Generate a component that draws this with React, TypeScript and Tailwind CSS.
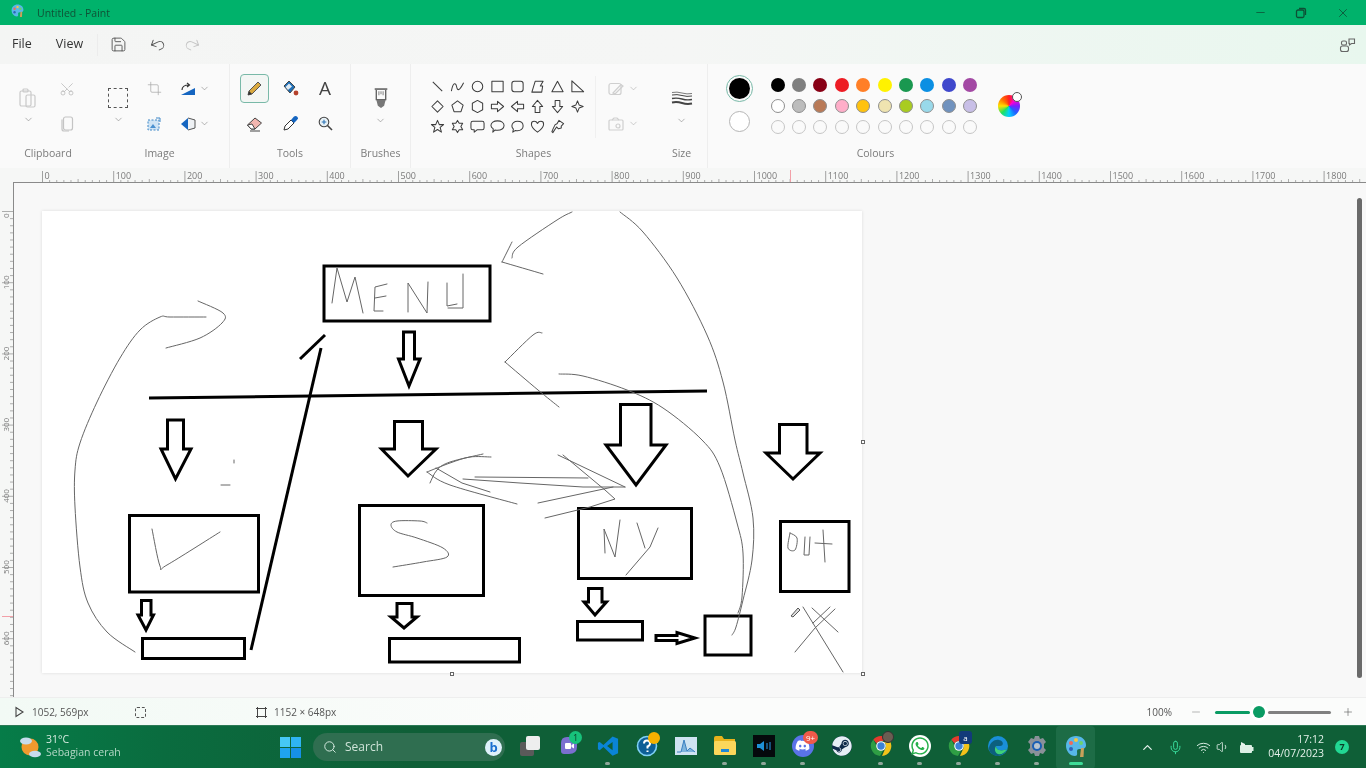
import React from "react";
import { ChevronDown, ChevronUp, Scissors, Crop, Save, Undo2, Redo2, Search, Mic, Wifi, Volume1, Minus, Plus, X } from "lucide-react";
import { FaDiscord, FaSteam, FaWhatsapp } from "react-icons/fa";

const Chev = ({ c = "text-[#8a8a8a]" }: { c?: string }) => <ChevronDown size={11} strokeWidth={1.4} className={c} />;

const shapes: React.ReactNode[] = [
  <path d="M3 3L13 13" />,
  <path d="M1.5 13C3 4 6 3 7 8S10 13 14.5 4" />,
  <circle cx="8" cy="8" r="5.6" />,
  <rect x="2" y="2.5" width="12" height="11" />,
  <rect x="2" y="2.5" width="12" height="11" rx="2.5" />,
  <path d="M2 14L5.5 2.5H14L11 7.5H13.5L12.5 14Z" />,
  <path d="M8 2.5L14 13.5H2Z" />,
  <path d="M2 2V13.5H14.5Z" />,
  <path d="M8 2L14 8L8 14L2 8Z" />,
  <path d="M8 2L14 6.5L11.7 13.5H4.3L2 6.5Z" />,
  <path d="M8 1.5L13.5 4.5V11.5L8 14.5L2.5 11.5V4.5Z" />,
  <path d="M1.5 5.5H8V2.5L14.5 8L8 13.5V10.5H1.5Z" />,
  <path d="M14.5 5.5H8V2.5L1.5 8L8 13.5V10.5H14.5Z" />,
  <path d="M5.5 14.5V8H2.5L8 1.5L13.5 8H10.5V14.5Z" />,
  <path d="M5.5 1.5V8H2.5L8 14.5L13.5 8H10.5V1.5Z" />,
  <path d="M8 2L9.7 6.3L14 8L9.7 9.7L8 14L6.3 9.7L2 8L6.3 6.3Z" />,
  <path d="M8 1.5L9.9 6H14.5L10.8 9L12.2 14L8 11.2L3.8 14L5.2 9L1.5 6H6.1Z" />,
  <path d="M8 1.5L9.8 4.5H13.5L11.6 8L13.5 11.5H9.8L8 14.5L6.2 11.5H2.5L4.4 8L2.5 4.5H6.2Z" />,
  <path d="M3 2.5H13Q15 2.5 15 4.5V9.5Q15 11.5 13 11.5H7.5L4.5 14V11.5H3Q1 11.5 1 9.5V4.5Q1 2.5 3 2.5Z" />,
  <path d="M8 2C12 2 15 4 15 7S12 12 8 12C7 12 6.5 12 5.5 11.7L3 14L3.5 10.5C2 9.5 1 8.5 1 7C1 4 4 2 8 2Z" />,
  <path d="M8 2.5C11.5 2.5 14 4.5 14 7.5S11.5 12.5 8 12.5C7 12.5 6.5 12.4 5.8 12.2L3 14L3.6 10.8C2.6 9.7 2 8.7 2 7.5C2 4.5 4.5 2.5 8 2.5Z" />,
  <path d="M8 14C3 10.5 1.5 8 1.5 5.5C1.5 3.5 3 2.5 4.5 2.5C6 2.5 7.3 3.3 8 4.7C8.7 3.3 10 2.5 11.5 2.5C13 2.5 14.5 3.5 14.5 5.5C14.5 8 13 10.5 8 14Z" />,
  <path d="M9.5 1.5L14.5 5L12 7.5L12 9.5L9 10.5L7 8.5L3 14.5L2 13.5L3.5 10L5.5 6L7.5 5L9.5 1.5Z" />,
];

const row1 = ["#000000", "#7f7f7f", "#880015", "#ed1c24", "#ff7f27", "#fff200", "#1a9850", "#0b8fe3", "#3f48cc", "#a349a4"];
const row2 = ["#ffffff", "#bcbcbc", "#b97a57", "#ffaec9", "#ffc20e", "#efe4b0", "#a9cc20", "#99d9ea", "#7092be", "#c8bfe7"];

const Label = ({ t, c = "" }: { t: string; c?: string }) => (
  <div className={"h-[23px] pt-[1px] flex items-center justify-center text-[10.5px] text-[#7b7b7b] leading-none " + c}>{t}</div>
);

function Ribbon() {
  return (
    <div className="h-[104px] bg-[#fafafa] flex">
      {/* Clipboard */}
      <div className="w-[96px] flex flex-col pt-[7px]">
        <div className="h-[70px] flex pl-[10px]">
          <div className="w-[36px] flex flex-col items-center pt-[16px] gap-[5px]">
            <svg width="20" height="22" viewBox="0 0 20 22" fill="none" stroke="#c9c9c9" strokeWidth="1.2"><rect x="2" y="4" width="11" height="15" rx="1.5" /><rect x="8" y="8" width="9" height="12" rx="1.5" /><rect x="5" y="2" width="5" height="3" rx="1" /></svg>
            <Chev />
          </div>
          <div className="w-[42px] flex flex-col">
            <div className="h-[35px] flex items-center justify-center"><Scissors size={16} strokeWidth={1.1} className="text-[#b5b5b5] rotate-[-90deg]" /></div>
            <div className="h-[35px] flex items-center justify-center">
              <svg width="14" height="16" viewBox="0 0 14 16" fill="none" stroke="#c4c4c4" strokeWidth="1.2"><rect x="3.5" y="1" width="9" height="13" rx="2" /><path d="M2 3.5V13Q2 15 4 15H9" /></svg>
            </div>
          </div>
        </div>
        <Label t="Clipboard" />
      </div>
      {/* Image */}
      <div className="w-[133px] flex flex-col pt-[7px]">
        <div className="h-[70px] flex">
          <div className="w-[44px] flex flex-col items-center pt-[17px] gap-[6px]">
            <div className="w-[20px] h-[20px] border-[1.5px] border-dashed border-[#555555]" />
            <Chev />
          </div>
          <div className="w-[28px] flex flex-col">
            <div className="h-[35px] flex items-center justify-center"><Crop size={15} strokeWidth={1.2} className="text-[#a9a9a9]" /></div>
            <div className="h-[35px] flex items-center justify-center">
              <svg width="14" height="14" viewBox="0 0 14 14" fill="none"><rect x="1" y="3" width="11" height="10" fill="#cfe4f5" stroke="#3f87c7" strokeDasharray="2 1.5" /><path d="M3 11L6 7L9 11Z" fill="#4a90d0" /><path d="M9 1H13V5" stroke="#3f87c7" /></svg>
            </div>
          </div>
          <div className="flex flex-col pl-[12px]">
            <div className="h-[35px] flex items-center gap-[3px]">
              <svg width="16" height="14" viewBox="0 0 16 14" fill="none"><path d="M1 13L15 6V13Z" fill="#1565c0" /><path d="M2 8C2 4 5 3 9 3M7 1L9.5 3L7 5" stroke="#333" strokeWidth="1.2" /></svg>
              <Chev />
            </div>
            <div className="h-[35px] flex items-center gap-[3px]">
              <svg width="16" height="14" viewBox="0 0 16 14" fill="none"><path d="M8 1L1 7L8 13Z" fill="#1565c0" /><path d="M8 1L15 3V11L8 13" stroke="#555" fill="#eef1f4" /></svg>
              <Chev />
            </div>
          </div>
        </div>
        <Label t="Image" c="pr-[6px]" />
      </div>
      {/* Tools */}
      <div className="w-[121px] flex flex-col pt-[7px] border-l border-[#eeeeee]">
        <div className="h-[70px] grid grid-cols-[36px_36px_36px] grid-rows-[35px_35px] pl-[6px] place-items-center">
          <div className="w-[29px] h-[29px] rounded-[4px] border border-[#79b9a8] bg-[#f3f6f4] flex items-center justify-center">
            <svg width="17" height="17" viewBox="0 0 17 17"><path d="M2 15L3 11L12 2L15 5L6 14Z" fill="#d9a93f" stroke="#555" strokeWidth="1" /><path d="M2 15L3 11L6 14Z" fill="#333" /></svg>
          </div>
          <svg width="17" height="17" viewBox="0 0 17 17"><path d="M2 6L7 1L13 7L8 13Z" fill="#1e6fb8" stroke="#444" /><path d="M3.5 7L7 3.5L10 6.5L6 10Z" fill="#dfeaf3" /><circle cx="14" cy="13" r="2.4" fill="#b5412c" /></svg>
          <span className="text-[19px] text-[#444444] leading-none font-['Open_Sans',sans-serif] pr-[2px]">A</span>
          <svg width="17" height="16" viewBox="0 0 17 16"><path d="M1.5 9L9 2L15.5 7L9 13H5Z" fill="#f2b6b0" stroke="#444" /><path d="M1.5 9L5 13H9L6 8Z" fill="#fff" stroke="#444" /><path d="M4 15H14" stroke="#444" /></svg>
          <svg width="17" height="17" viewBox="0 0 17 17"><path d="M2 15L3 11L9 5L12 8L6 14Z" fill="#fff" stroke="#333" /><path d="M9 5L12 1.5Q14 0.5 15.5 2T15 5L12 8Z" fill="#1565c0" /></svg>
          <svg width="15" height="15" viewBox="0 0 15 15" fill="none" stroke="#444" strokeWidth="1.1" className="mr-[2px]"><circle cx="6" cy="6" r="4.8" fill="#e8f1f6" /><path d="M9.5 9.5L14 14" strokeWidth="1.6" /><path d="M6 3.7V8.3M3.7 6H8.3" stroke="#2a72b5" /></svg>
        </div>
        <Label t="Tools" />
      </div>
      {/* Brushes */}
      <div className="w-[60px] flex flex-col pt-[7px] border-l border-[#eeeeee]">
        <div className="h-[70px] flex flex-col items-center pt-[17px] gap-[6px]">
          <svg width="16" height="21" viewBox="0 0 14 20"><path d="M1 1H13" stroke="#555" strokeWidth="1.4" /><path d="M2.5 2V11H11.5V2" fill="none" stroke="#555" strokeWidth="1.2" /><path d="M5 3V7M7 3V6M9 3V7" stroke="#888" /><path d="M2.5 11H11.5L10 17L7 19L4 17Z" fill="#777" /></svg>
          <Chev />
        </div>
        <Label t="Brushes" />
      </div>
      {/* Shapes */}
      <div className="w-[246px] flex flex-col pt-[7px] border-l border-[#eeeeee]">
        <div className="h-[70px] flex">
          <div className="ml-[16px] mt-[5px] h-[62px] w-[169px] pr-[9px] border-r border-[#f0f0f0] grid grid-cols-[repeat(8,20px)] auto-rows-[20px] place-items-center">
            {shapes.map((s, i) => (
              <svg key={i} width="15" height="15" viewBox="0 0 16 16" fill="none" stroke="#3d3d3d" strokeWidth="1.1" strokeLinejoin="round">{s}</svg>
            ))}
          </div>
          <div className="flex flex-col pl-[12px]">
            <div className="h-[35px] flex items-center gap-[4px]">
              <svg width="16" height="14" viewBox="0 0 16 14" fill="none" stroke="#cfcfcf" strokeWidth="1.2"><rect x="1" y="1.5" width="12" height="11" rx="2" /><path d="M5 11L13 2.5L15 4L7 12Z" /></svg>
              <Chev c="text-[#b0b0b0]" />
            </div>
            <div className="h-[35px] flex items-center gap-[4px]">
              <svg width="16" height="14" viewBox="0 0 16 14" fill="none" stroke="#cfcfcf" strokeWidth="1.2"><rect x="1" y="3" width="14" height="10" rx="1" /><path d="M4 3L6 1H9L11 3" /><circle cx="10" cy="9" r="2" /></svg>
              <Chev c="text-[#b0b0b0]" />
            </div>
          </div>
        </div>
        <Label t="Shapes" />
      </div>
      {/* Size */}
      <div className="w-[51px] flex flex-col pt-[7px]">
        <div className="h-[70px] flex flex-col items-center pt-[20px] gap-[9px]">
          <svg width="22" height="15" viewBox="0 0 22 15" fill="none" stroke="#444"><path d="M1 1.5Q6 0.5 11 2T21 2.5" strokeWidth="0.7" /><path d="M1 4Q6 3 11 4.5T21 5" strokeWidth="1" /><path d="M1 7.5Q6 6.5 11 8T21 8.5" strokeWidth="1.4" /><path d="M1 11.5Q6 10.5 11 12T21 12.5" strokeWidth="2" /></svg>
          <Chev />
        </div>
        <Label t="Size" />
      </div>
      {/* Colours */}
      <div className="w-[336px] flex flex-col pt-[7px] border-l border-[#eeeeee]">
        <div className="h-[70px] flex">
          <div className="w-[63px] -mr-[4px] flex flex-col items-center">
            <div className="h-[35px] flex items-center justify-center">
              <div className="w-[27px] h-[27px] rounded-full border-[1.5px] border-[#79b9a8] flex items-center justify-center"><div className="w-[21px] h-[21px] rounded-full bg-black" /></div>
            </div>
            <div className="h-[31px] flex items-center justify-center"><div className="w-[21px] h-[21px] rounded-full bg-white border border-[#b5b5b5]" /></div>
          </div>
          <div className="mt-[3px] grid grid-cols-[repeat(10,21.4px)] auto-rows-[21px] place-items-center h-[63px]">
            {row1.map((c) => <div key={c} className="w-[14px] h-[14px] rounded-full" style={{ backgroundColor: c }} />)}
            {row2.map((c) => <div key={c} className="w-[14px] h-[14px] rounded-full border border-[#8f8f8f]" style={{ backgroundColor: c }} />)}
            {row1.map((c) => <div key={c} className="w-[14px] h-[14px] rounded-full border border-[#c6c6c6]" />)}
          </div>
          <div className="ml-[17px] mt-[21px] relative w-[24px] h-[24px]">
            <div className="w-[22px] h-[22px] mt-[3px] rounded-full bg-[conic-gradient(#ff2020,#ff00d0,#7a20ff,#2060ff,#00d0ff,#20e060,#ffe000,#ff7000,#ff2020)]" />
            <div className="absolute top-0 right-0 w-[10px] h-[10px] rounded-full bg-white border border-[#555555]" />
          </div>
        </div>
        <Label t="Colours" />
      </div>
    </div>
  );
}

function HRuler() {
  const step = 71.2;
  const ticks = Array.from({ length: 190 }, (_, i) => i);
  return (
    <svg width="1366" height="15" viewBox="0 168 1366 15" className="block">
      <rect x="0" y="168" width="1366" height="15" fill="#f6f7f6" />
      {ticks.map((i) => {
        const x = 42.5 + (i * step) / 10;
        const major = i % 10 === 0;
        return <path key={i} d={`M${x} ${major ? 171 : i % 5 === 0 ? 179 : 180}V183`} stroke={major ? "#8a8a8a" : "#9a9a9a"} strokeWidth="0.8" />;
      })}
      {Array.from({ length: 19 }, (_, i) => (
        <text key={i} x={44.5 + i * step} y="179" fontSize="9" fill="#7a7a7a" fontFamily="'Open Sans',sans-serif">{i * 100}</text>
      ))}
      <path d="M790.5 170V183" stroke="#f2a0a8" strokeWidth="1" />
      <path d="M13 182.5H1366" stroke="#8a8a8a" strokeWidth="1" />
    </svg>
  );
}

function VRuler() {
  const step = 71.2;
  return (
    <svg width="14" height="514" viewBox="0 183 14 514" className="block shrink-0">
      <rect x="0" y="183" width="14" height="514" fill="#f6f7f6" />
      {Array.from({ length: 72 }, (_, i) => {
        const y = 211.5 + (i * step) / 10;
        const major = i % 10 === 0;
        return <path key={i} d={`M${major ? 2 : 10} ${y}H13`} stroke="#9a9a9a" strokeWidth="0.8" />;
      })}
      {Array.from({ length: 7 }, (_, i) => (
        <text key={i} x="9" y={218 + i * step} fontSize="8" fill="#7a7a7a" fontFamily="'Open Sans',sans-serif" transform={`rotate(-90 9 ${218 + i * step})`} textAnchor="start">{i * 100}</text>
      ))}
      <path d="M2 616.5H13" stroke="#f2a0a8" />
      <path d="M13.5 183V697" stroke="#8a8a8a" />
    </svg>
  );
}

const thick = [
  "M149 398L707 391",
  "M300 359L325 335",
  "M321 348L251 650",
  "M167.5 420H183.5V449H191L175.5 479L161 449H167.5Z",
  "M403.5 332H414.5V359H420L409 386L398.5 359H403.5Z",
  "M394.5 421.5H422.5V449H436L408 476L381.5 449H394.5Z",
  "M620.5 404.5H651V445H666L636 485L606 445H620.5Z",
  "M779.5 424.5H807V453H820L793 479L766 453H779.5Z",
  "M141.5 600.5H151V615H153.5L146 630L138 615H141.5Z",
  "M397 603.5H412V617H417L404 628L391 617H397Z",
  "M588.5 588.5H602V602H606.5L595 615L584 602H588.5Z",
  "M656 635.5H677V632.5L695 638L677 643.5V640.5H656Z",
];

// Freehand strokes given as point lists; a Catmull-Rom pass rounds them off like a mouse-drawn line.
const curves: number[][] = [
  [206, 317, 170, 317, 160, 317, 140, 330, 120, 358, 97, 402, 80, 443, 75, 470, 75, 507, 80, 567, 88, 603, 107, 632, 135, 652],
  [198, 301, 223, 313, 222, 323, 200, 338, 166, 348],
  [427, 523, 420, 521, 397, 521, 391, 525, 397, 532, 417, 538, 443, 548, 447, 557, 423, 562, 393, 567],
  [152, 529, 160, 566, 167, 565, 220, 532],
  [620, 212, 643, 232, 677, 278, 707, 335, 723, 382, 735, 440, 743, 473, 753, 518, 752, 560, 743, 600, 736, 627, 732, 635],
  [559, 374, 583, 376, 627, 390, 663, 408, 702, 440, 720, 467, 737, 523, 743, 553, 742, 597, 738, 613],
  [572, 212, 557, 220, 518, 247, 512, 258],
  [502, 262, 543, 274],
  [512, 242, 502, 262],
  [542, 333, 533, 335, 505, 362],
  [505, 362, 538, 390, 559, 407],
  [491, 457, 470, 457, 450, 463, 427, 472],
  [427, 472, 450, 485, 517, 504],
  [483, 454, 450, 462, 437, 470, 430, 483],
  [790, 533, 788, 548, 795, 550, 797, 538, 790, 533],
];

function smooth(p: number[]) {
  const n = p.length / 2;
  const at = (i: number) => {
    const k = Math.max(0, Math.min(n - 1, i));
    return [p[k * 2], p[k * 2 + 1]];
  };
  let d = `M${p[0]} ${p[1]}`;
  for (let i = 0; i < n - 1; i++) {
    const [x0, y0] = at(i - 1);
    const [x1, y1] = at(i);
    const [x2, y2] = at(i + 1);
    const [x3, y3] = at(i + 2);
    d += `C${x1 + (x2 - x0) / 6} ${y1 + (y2 - y0) / 6} ${x2 - (x3 - x1) / 6} ${y2 - (y3 - y1) / 6} ${x2} ${y2}`;
  }
  return d;
}

const thin = [
  "M332 303L337 268L347 302L355 277L363 313",
  "M387 284L375 287L374 311L383 311M375 298L386 296",
  "M408 312L408 283L427 313L428 282",
  "M447 283L447 306L457 304M463 274L463 308L448 308",
  "M605 553L604 529L615 557L620 520",
  "M637 523L645 548M658 528L650 547L626 575",
  "M805 537L804 555L809 555L810 537",
  "M815 543L832 544M823 530L825 562",
  "M803 607L843 672",
  "M795 652L815 628L835 609",
  "M812 608L838 632",
  "M813 623L830 607",
  "M436 468L462 483L490 492",
  "M463 479L520 483L583 487L625 487",
  "M475 477L588 478",
  "M558 455L625 487",
  "M563 455L605 490L615 499L590 507L545 518",
  "M538 503L613 487",
  "M234 460V463",
  "M221 485H230",
];

function Drawing() {
  return (
    <svg width="820" height="462" viewBox="42 211 820 462" className="block">
      <g fill="none" stroke="#000" strokeWidth="3" strokeLinejoin="miter">
        {thick.map((d) => <path key={d} d={d} />)}
        <rect x="324" y="266" width="166" height="55" />
        <rect x="129.5" y="515.5" width="129" height="76.5" />
        <rect x="142.5" y="638.5" width="102" height="20" />
        <rect x="359.5" y="505.5" width="124" height="90" />
        <rect x="389.5" y="638.5" width="130" height="23.5" />
        <rect x="578.5" y="508.5" width="113" height="70" />
        <rect x="577.5" y="621.5" width="65" height="18.5" />
        <rect x="705" y="616" width="46" height="39" />
        <rect x="780.5" y="521.5" width="68.5" height="70" />
      </g>
      <g fill="none" stroke="#666" strokeWidth="1" strokeLinejoin="round" strokeLinecap="round">
        {curves.map((p, i) => <path key={i} d={smooth(p)} />)}
        {thin.map((d) => <path key={d} d={d} />)}
      </g>
      <path d="M791 616L798 608L800 610L793 617Z" fill="#ddd" stroke="#555" strokeWidth="1" />
    </svg>
  );
}

function CanvasArea() {
  return (
    <div className="flex h-[514px] bg-[#f8f8f8]">
      <VRuler />
      <div className="flex-1 pl-[28px] pt-[28px]">
        <div className="relative w-[820px] h-[462px] bg-white shadow-[0_0_3px_rgba(0,0,0,0.12)]">
          <Drawing />
          <div className="absolute left-[819px] top-[229px] w-[4px] h-[4px] bg-white border border-[#666666]" />
          <div className="absolute left-[408px] top-[461px] w-[4px] h-[4px] bg-white border border-[#666666]" />
          <div className="absolute left-[819px] top-[461px] w-[4px] h-[4px] bg-white border border-[#666666]" />
        </div>
      </div>
      <div className="w-[9px] pt-[15px]">
        <div className="w-[5px] h-[480px] rounded-full bg-[#6a6a6a]" />
      </div>
    </div>
  );
}

function StatusBar() {
  return (
    <div className="h-[28px] flex items-center pt-[1px] text-[10px] text-[#555555] bg-[linear-gradient(90deg,#f2faf5,#fbfcfb_40%,#fbfcfb)] border-t border-[#eeeeee]">
      <div className="w-[123px] flex items-center pl-[13px] gap-[7px]">
        <svg width="12" height="12" viewBox="0 0 12 12" fill="none" stroke="#444" strokeWidth="1.1"><path d="M3 1.5V10.5L10 6Z" /></svg>
        <span>1052, 569px</span>
      </div>
      <div className="w-[132px] flex items-center pl-[12px]">
        <div className="w-[11px] h-[11px] border border-dashed border-[#555555] rounded-[2px]" />
      </div>
      <div className="flex items-center gap-[7px] pl-[1px]">
        <svg width="11" height="11" viewBox="0 0 11 11" fill="none" stroke="#444" strokeWidth="1"><rect x="1.5" y="1.5" width="8" height="8" /><path d="M0 1.5H3M1.5 0V3M8 1.5H11M9.5 0V3M0 9.5H3M1.5 8V11M8 9.5H11M9.5 8V11" /></svg>
        <span>1152 × 648px</span>
      </div>
      <div className="ml-auto flex items-center pr-[12px]">
        <span className="mr-[18px]">100%</span>
        <Minus size={12} strokeWidth={1.2} className="text-[#888888] mr-[13px]" />
        <div className="w-[35px] h-[3px] rounded-full bg-[#0a9b63]" />
        <div className="mx-[3px] w-[12px] h-[12px] rounded-full bg-[#0a9b63] ring-[3px] ring-white" />
        <div className="w-[63px] h-[3px] rounded-full bg-[#808080]" />
        <Plus size={12} strokeWidth={1.2} className="text-[#555555] ml-[11px]" />
      </div>
    </div>
  );
}

const Dot = ({ on }: { on?: boolean }) => (
  <div className={on ? "h-[3px] w-[14px] rounded-full bg-[#3ddc97]" : "h-[3px] w-[5px] rounded-full bg-[#8fa79a]"} />
);

const Chrome = () => (
  <svg width="22" height="22" viewBox="0 0 22 22">
    <path d="M11 1A10 10 0 0 1 20 6H11A5 5 0 0 0 6.5 8.5L3.3 4.5A10 10 0 0 1 11 1Z" fill="#e33b2e" />
    <path d="M20 6A10 10 0 0 1 12 21L15.5 13A5 5 0 0 0 16 11A5 5 0 0 0 14 7Z" fill="#f2c21a" />
    <path d="M3.3 4.5L7.5 13A5 5 0 0 0 13 15.5L10 21A10 10 0 0 1 3.3 4.5Z" fill="#2f9e44" />
    <circle cx="11" cy="11" r="4.8" fill="#fff" />
    <circle cx="11" cy="11" r="3.7" fill="#3b82d6" />
  </svg>
);

const PaintIcon = ({ s = 22 }: { s?: number }) => (
  <svg width={s} height={s} viewBox="0 0 22 22">
    <path d="M11 1C5 1 1 5 1 11C1 16 5 21 10 21C13 21 12 18 12 16C12 14 14 14 16 14C19 14 21 13 21 10C21 5 17 1 11 1Z" fill="#57b7e8" />
    <circle cx="6" cy="8" r="2" fill="#f06a5a" />
    <circle cx="11" cy="5" r="2" fill="#f4c542" />
    <circle cx="16" cy="8" r="2" fill="#6dd16d" />
    <circle cx="6" cy="14" r="2" fill="#2e63b8" />
    <path d="M15 22L16 13L19 13L18.5 22Z" fill="#c9a15a" />
  </svg>
);

function Taskbar() {
  const cell = "relative w-[39px] h-[43px] flex flex-col items-center";
  const box = "h-[36px] flex items-center justify-center pt-[3px]";
  const items: { icon: React.ReactNode; dot?: boolean; badge?: React.ReactNode }[] = [
    { icon: <svg width="22" height="22" viewBox="0 0 22 22"><rect x="1" y="7" width="14" height="14" rx="2" fill="#5a5a5a" /><rect x="7" y="1" width="14" height="14" rx="2" fill="#eeeeee" /></svg> },
    {
      icon: <svg width="20" height="20" viewBox="0 0 20 20"><path d="M8 1H14Q18 1 18 5V11Q18 18 10 18H5Q2 18 2 15V7Q2 1 8 1Z" fill="#7b6fd0" /><rect x="6" y="7" width="6" height="6" rx="1" fill="#fff" /><path d="M12.5 9L15 7.5V12.5L12.5 11Z" fill="#fff" /></svg>,
      badge: <div className="absolute top-[5px] left-[20px] w-[13px] h-[13px] rounded-full bg-[#17c27b] text-[9px] leading-[13px] text-center text-[#0b3b26]">1</div>,
    },
    { icon: <svg width="22" height="22" viewBox="0 0 24 24"><path d="M17 1.5L23 4V20L17 22.5L7 13L3 16.5L1 15.5V8.5L3 7.5L7 11ZM17 7.5L11 12L17 16.5Z" fill="#0a84d6" fillRule="evenodd" /></svg>, dot: true },
    {
      icon: <svg width="22" height="22" viewBox="0 0 22 22"><circle cx="11" cy="11" r="9.5" fill="#0e5f96" stroke="#7fd0f5" strokeWidth="1.6" /><path d="M8 8.5Q8 5.5 11 5.5T14 8.5Q14 10.5 11.5 11.5V13.5M11.5 15.5V17" stroke="#fff" strokeWidth="2" fill="none" /></svg>,
      badge: <div className="absolute top-[6px] left-[21px] w-[12px] h-[12px] rounded-full bg-[#f7b100]" />,
    },
    { icon: <svg width="22" height="18" viewBox="0 0 22 18"><rect width="22" height="18" fill="#cfe3f2" /><path d="M2 15H6L9 3L12 14L15 11L20 15" fill="#7fb4dd" stroke="#3a7fc0" /></svg> },
    { icon: <svg width="23" height="21" viewBox="0 0 23 21"><path d="M1 3Q1 1 3 1H9L11 4H22V8H1Z" fill="#e8b21c" /><rect x="1" y="6" width="22" height="14" rx="1.5" fill="#fbd75b" /><rect x="8" y="14" width="8" height="3" fill="#1e88d6" /></svg>, dot: true },
    { icon: <svg width="22" height="22" viewBox="0 0 22 22"><rect width="22" height="22" fill="#05090c" /><path d="M4 9H7L11 6V16L7 13H4Z" fill="#1e90d6" /><path d="M14 8V14M17 7V15" stroke="#1e6fa8" strokeWidth="1.4" /></svg>, dot: true },
    {
      icon: <div className="w-[22px] h-[22px] rounded-full bg-[#5a73e8] flex items-center justify-center"><FaDiscord size={15} color="#fff" /></div>,
      dot: true,
      badge: <div className="absolute top-[5px] left-[20px] w-[15px] h-[13px] rounded-full bg-[#ef5a4a] text-[8px] leading-[13px] text-center text-white">9+</div>,
    },
    { icon: <div className="w-[20px] h-[20px] rounded-full bg-[#0f2a4a] flex items-center justify-center"><FaSteam size={20} color="#e6eef5" /></div> },
    {
      icon: <Chrome />,
      dot: true,
      badge: <div className="absolute top-[5px] left-[21px] w-[12px] h-[12px] rounded-full bg-[#6b5d52] border border-[#333333]" />,
    },
    { icon: <div className="w-[22px] h-[22px] rounded-full bg-white flex items-center justify-center"><FaWhatsapp size={20} color="#25b04a" /></div>, dot: true },
    {
      icon: <Chrome />,
      dot: true,
      badge: <div className="absolute top-[5px] left-[20px] w-[13px] h-[13px] rounded-[3px] bg-[#123a7a] text-[8px] leading-[13px] text-center text-white">a</div>,
    },
    { icon: <svg width="22" height="22" viewBox="0 0 22 22"><circle cx="11" cy="11" r="10" fill="#1a8fd8" /><path d="M2 13C3 7 8 4 12 5C17 6 17 11 13 11H9C9 15 14 17 20 14C18 19 13 21 10 21C5 20 2 17 2 13Z" fill="#0c5f7e" /><path d="M9 11C9 15 14 17 20 14C18 18 14 20 11 19C8 18 7 14 9 11Z" fill="#3fd07a" /></svg>, dot: true },
    { icon: <svg width="22" height="22" viewBox="0 0 22 22"><path d="M9 1H13L14 4L17 3L20 7L18 9V13L20 15L17 19L14 18L13 21H9L8 18L5 19L2 15L4 13V9L2 7L5 3L8 4Z" fill="#8a9199" /><circle cx="11" cy="11" r="5" fill="#1a5fb4" /><circle cx="11" cy="11" r="3" fill="#b9c4ce" /></svg>, dot: true },
  ];
  return (
    <div className="h-[43px] flex items-stretch text-white bg-[linear-gradient(90deg,#067c48,#0a6c3f_12%,#0f5f37_30%,#0f5f37)] border-t border-[#2c7a56]">
      <div className="w-[280px] flex items-center pl-[17px]">
        <svg width="26" height="26" viewBox="0 0 26 26">
          <circle cx="13" cy="13" r="8.5" fill="#f09a2e" />
          <ellipse cx="9" cy="7" rx="6" ry="3.5" fill="#c7dcee" />
          <ellipse cx="18" cy="20" rx="6" ry="3.3" fill="#c7dcee" />
        </svg>
        <div className="ml-[3px] mb-[2px] flex flex-col leading-[13px]">
          <span className="text-[10.5px] text-[#d8ece2]">31°C</span>
          <span className="text-[10.5px] text-[#b6d8c7]">Sebagian cerah</span>
        </div>
      </div>
      <div className="w-[33px] flex items-center">
        <div className="grid grid-cols-[10px_10px] gap-[1px]">
          <div className="h-[10px] bg-[#46c8f5]" /><div className="h-[10px] bg-[#2fb4f2]" />
          <div className="h-[10px] bg-[#1fa4ef]" /><div className="h-[10px] bg-[#1690e6]" />
        </div>
      </div>
      <div className="w-[197px] flex items-center">
        <div className="w-[192px] h-[28px] rounded-full bg-[#2f6e50] flex items-center pl-[10px] pr-[2px]">
          <Search size={14} strokeWidth={1.6} className="text-[#dcefe5]" />
          <span className="ml-[8px] text-[12px] text-[#cfe3d8]">Search</span>
          <div className="ml-auto mr-[1px] w-[17px] h-[17px] rounded-full bg-[#dff1fb] flex items-center justify-center text-[13px] font-bold text-[#1a6fd0] leading-none">b</div>
        </div>
      </div>
      <div className="flex">
        {items.map((it, i) => (
          <div key={i} className={cell}>
            <div className={box}>{it.icon}</div>
            {it.badge}
            {it.dot ? <Dot /> : null}
          </div>
        ))}
        <div className={cell + " bg-[#1d6c46] rounded-[4px]"}>
          <div className={box}><PaintIcon /></div>
          <Dot on />
        </div>
      </div>
      <div className="ml-auto flex items-center">
        <ChevronUp size={15} strokeWidth={2} className="text-[#e6f2ec] mr-[13px]" />
        <Mic size={15} strokeWidth={1.6} className="text-[#37d99a] mr-[13px]" />
        <Wifi size={15} strokeWidth={1.6} className="text-[#d8ece2] mr-[5px]" />
        <Volume1 size={14} strokeWidth={1.4} className="text-[#e6f2ec] mr-[9px]" />
        <svg width="15" height="13" viewBox="0 0 15 13" className="mr-[14px]"><rect x="1" y="4" width="12" height="8" rx="1" fill="#dcefe5" /><path d="M2 1L6 3V5H2Z" fill="#e6f2ec" /><rect x="13" y="6" width="1.5" height="4" fill="#dcefe5" /></svg>
        <div className="flex flex-col items-end mb-[2px] leading-[14px] text-[10.5px] text-[#e4f1ea] mr-[11px]">
          <span>17:12</span>
          <span>04/07/2023</span>
        </div>
        <div className="w-[14px] h-[14px] rounded-full bg-[#22d893] text-[9px] leading-[14px] text-center font-bold text-[#0b3b26] mr-[17px]">7</div>
      </div>
    </div>
  );
}

export default function App() {
  return (
    <div className="w-[1366px] h-[768px] overflow-hidden flex flex-col bg-white font-['Open_Sans',sans-serif] blur-[0.4px]">
      {/* Title bar */}
      <div className="h-[25px] bg-[#00b26b] flex items-center shrink-0">
        <div className="w-[37px] flex justify-center pr-[3px] pb-[4px]"><PaintIcon s={13} /></div>
        <span className="text-[10.5px] pt-[2px] text-[#0f5136]">Untitled - Paint</span>
        <div className="ml-auto flex items-center text-[#0d4f35]">
          <Minus size={13} strokeWidth={1.4} className="mr-[28px]" />
          <svg width="12" height="12" viewBox="0 0 12 12" fill="none" stroke="currentColor" strokeWidth="1.3" className="mr-[29px]"><rect x="1.5" y="3" width="7.5" height="7.5" rx="1.5" /><path d="M4 1.5H9Q10.5 1.5 10.5 3V8" /></svg>
          <X size={14} strokeWidth={1.4} className="mr-[16px]" />
        </div>
      </div>
      {/* Menu bar */}
      <div className="h-[39px] shrink-0 flex items-center bg-[linear-gradient(90deg,#f4f5f4,#f5f6f5_50%,#e8f7ee)]">
        <span className="ml-[12px] text-[12.5px] text-[#333333]">File</span>
        <span className="ml-[24px] text-[12.5px] text-[#333333]">View</span>
        <div className="ml-[14px] w-px h-[22px] bg-[#ececec]" />
        <Save size={17} strokeWidth={1.3} className="ml-[12px] text-[#555555]" />
        <Undo2 size={17} strokeWidth={1.3} className="ml-[22px] text-[#555555] rotate-[-25deg]" />
        <Redo2 size={17} strokeWidth={1.3} className="ml-[18px] text-[#c5c5c5] rotate-[25deg]" />
        <svg width="17" height="16" viewBox="0 0 17 16" fill="none" stroke="#666" strokeWidth="1.1" className="ml-auto mr-[10px]"><rect x="1.5" y="9" width="8" height="5.5" rx="2" /><rect x="2.5" y="4" width="5" height="4" rx="1.5" /><path d="M10 2H15.5V6.5H12.5L10.5 8V6.5H10Z" /></svg>
      </div>
      <Ribbon />
      <HRuler />
      <CanvasArea />
      <StatusBar />
      <Taskbar />
    </div>
  );
}
